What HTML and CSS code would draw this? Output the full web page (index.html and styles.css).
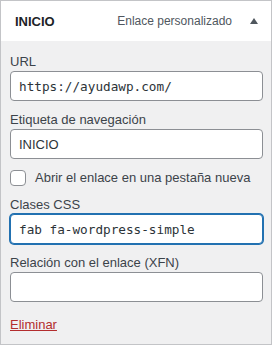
FILE: index.html
```html
<!DOCTYPE html>
<html lang="es">
<head>
    <meta charset="UTF-8">
    <meta name="viewport" content="width=device-width, initial-scale=1.0">
    <title>Elemento de menú</title>
    <link rel="stylesheet" href="styles.css">
</head>
<body>
    <div class="menu-item">
        <!-- Cabecera del elemento -->
        <div class="item-bar">
            <span class="item-title">INICIO</span>
            <span class="item-type">Enlace personalizado</span>
            <span class="item-toggle"></span>
        </div>

        <!-- Ajustes del elemento -->
        <div class="item-settings">
            <div class="field">
                <label for="item-url">URL</label>
                <input type="text" id="item-url" class="code" value="https://ayudawp.com/">
            </div>

            <div class="field">
                <label for="item-title">Etiqueta de navegación</label>
                <input type="text" id="item-title" value="INICIO">
            </div>

            <div class="field-check">
                <input type="checkbox" id="item-target">
                <label for="item-target">Abrir el enlace en una pestaña nueva</label>
            </div>

            <div class="field">
                <label for="item-classes">Clases CSS</label>
                <input type="text" id="item-classes" class="code focused" value="fab fa-wordpress-simple">
            </div>

            <div class="field">
                <label for="item-xfn">Relación con el enlace (XFN)</label>
                <input type="text" id="item-xfn">
            </div>

            <a href="javascript:void(0)" class="item-delete">Eliminar</a>
        </div>
    </div>
</body>
</html>
```

FILE: styles.css
```css
* {
    margin: 0;
    padding: 0;
    box-sizing: border-box;
}

body {
    font-family: "Liberation Sans", Arial, sans-serif;
    font-size: 13px;
    color: #3c434a;
    background: #fff;
}

.menu-item {
    width: 272px;
    border: 1px solid #c3c4c7;
}

.item-bar {
    display: flex;
    align-items: center;
    height: 40px;
    padding: 0 13px 0 14px;
    background: #fff;
}

.item-title {
    font-weight: bold;
    color: #1d2327;
    flex: 1;
}

.item-type {
    color: #50575e;
    font-size: 12px;
}

.item-toggle {
    width: 0;
    height: 0;
    margin-left: 18px;
    border-left: 4px solid transparent;
    border-right: 4px solid transparent;
    border-bottom: 6px solid #50575e;
}

.item-settings {
    background: #f0f0f1;
    padding: 12px 8px 10px 9px;
}

.field {
    margin-bottom: 10px;
}

.field label {
    display: block;
    line-height: 18px;
}

.field input {
    display: block;
    width: 100%;
    height: 30px;
    padding: 0 8px;
    border: 1px solid #8c8f94;
    border-radius: 4px;
    background: #fff;
    font-family: "Liberation Sans", Arial, sans-serif;
    font-size: 13px;
    color: #2c3338;
}

.field input.code {
    font-family: "DejaVu Sans Mono", monospace;
    font-size: 12.7px;
}

.field input.focused {
    border-color: #2271b1;
    box-shadow: 0 0 0 1px #2271b1;
    outline: none;
}

.field-check {
    display: flex;
    align-items: center;
    gap: 9px;
    margin: 11px 0 10px;
    line-height: 16px;
}

.field-check input {
    appearance: none;
    width: 16px;
    height: 16px;
    border: 1px solid #8c8f94;
    border-radius: 4px;
    background: #fff;
}

.item-delete {
    display: inline-block;
    margin-top: 4px;
    line-height: 18px;
    color: #b32d2e;
    text-decoration: underline;
}
```
